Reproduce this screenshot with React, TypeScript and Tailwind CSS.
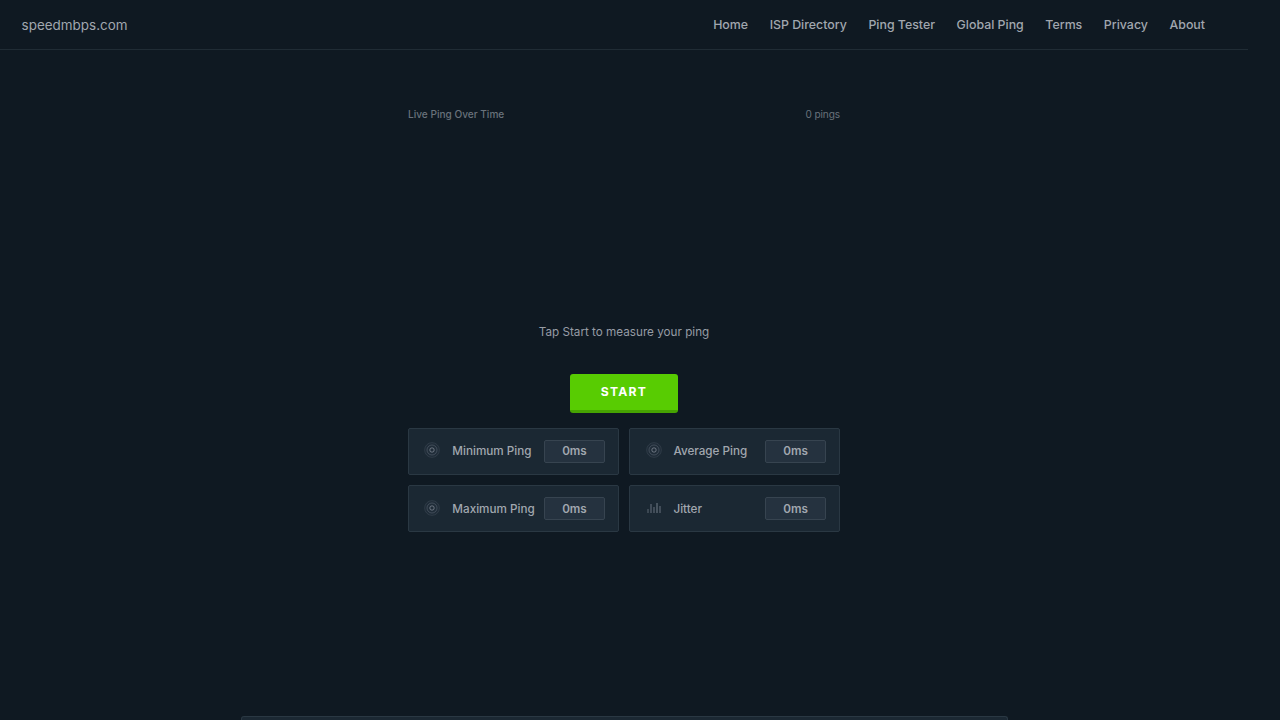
import React from 'react';

const navLinks = ['Home', 'ISP Directory', 'Ping Tester', 'Global Ping', 'Terms', 'Privacy', 'About'];

const PingIcon: React.FC = () => (
  <svg width="16" height="16" viewBox="0 0 16 16" fill="none" stroke="#9ca3af" className="shrink-0 mb-[1.6px]">
    <circle cx="8" cy="8" r="7.4" fill="#9ca3af" fillOpacity="0.04" strokeOpacity="0.14" />
    <circle cx="8" cy="8" r="5" strokeOpacity="0.28" />
    <circle cx="8" cy="8" r="2.2" strokeOpacity="0.6" />
  </svg>
);

const JitterIcon: React.FC = () => (
  <svg width="16" height="16" viewBox="0 0 16 16" fill="#9ca3af" className="shrink-0 mb-[1.6px]">
    <rect x="1" y="9" width="2" height="4" opacity="0.25" />
    <rect x="4" y="4" width="2" height="9" opacity="0.3" />
    <rect x="7" y="7" width="2" height="6" opacity="0.3" />
    <rect x="10" y="3" width="2" height="10" opacity="0.35" />
    <rect x="13" y="6" width="2" height="7" opacity="0.3" />
  </svg>
);

interface StatCardProps {
  label: string;
  value: string;
  icon: React.ReactNode;
}

const StatCard: React.FC<StatCardProps> = ({ label, value, icon }) => (
  <div className="flex items-center h-[47.2px] pl-[15.47px] pr-[13px] rounded-[2px] bg-[#1b2833] border border-[#2a3843]">
    {icon}
    <span className="ml-[11.9px] pt-[1.95px] text-[11.7px] font-medium text-[#a1a7af] whitespace-nowrap">
      {label}
    </span>
    <span className="ml-auto flex items-center justify-center w-[61px] h-[23px] pt-[1.95px] rounded-[2px] bg-[#25323f] border border-[#374450] text-[11.7px] font-semibold text-[#a1a7af]">
      {value}
    </span>
  </div>
);

export default function App() {
  return (
    <div className="h-screen overflow-hidden bg-[#0f1922] font-[Inter,sans-serif]">
      <div className="flex flex-col w-[1248px] h-full">
        <header className="flex items-center justify-between h-[50px] shrink-0 pt-[2px] pl-[21.6px] pr-[43px] border-b border-[#202c35]">
          <a className="text-[13.45px] text-[#a1a7af]">speedmbps.com</a>
          <nav className="flex gap-[21.6px] text-[12.375px] font-medium text-[#a1a7af]">
            {navLinks.map((link) => (
              <a key={link} className="whitespace-nowrap">{link}</a>
            ))}
          </nav>
        </header>

        <main className="flex flex-col items-center w-[432px] mx-auto pt-[57px]">
          <div className="flex justify-between w-full h-[15px] leading-[15px] text-[10.08px] text-[#69727b]">
            <span className="font-medium">Live Ping Over Time</span>
            <span className="tracking-[-0.1px]">0 pings</span>
          </div>
          <div className="h-[200px] w-full" />
          <p className="h-5 text-[11.7px] leading-5 text-[#969ca5]">Tap Start to measure your ping</p>
          <button className="mt-8 w-[108px] h-[39.4px] rounded-[3px] bg-[#58cc02] border-b-[3px] border-[#46a302] text-[12.2px] font-bold tracking-[1.25px] text-white">
            START
          </button>
          <div className="grid grid-cols-2 gap-[10.1px] w-full mt-[14.2px]">
            <StatCard label="Minimum Ping" value="0ms" icon={<PingIcon />} />
            <StatCard label="Average Ping" value="0ms" icon={<PingIcon />} />
            <StatCard label="Maximum Ping" value="0ms" icon={<PingIcon />} />
            <StatCard label="Jitter" value="0ms" icon={<JitterIcon />} />
          </div>
        </main>

        <section className="w-[767px] h-[4px] shrink-0 mt-auto mx-auto rounded-t-[3px] bg-[#1b2833] border border-b-0 border-[#2a3843]" />
      </div>
    </div>
  );
}
